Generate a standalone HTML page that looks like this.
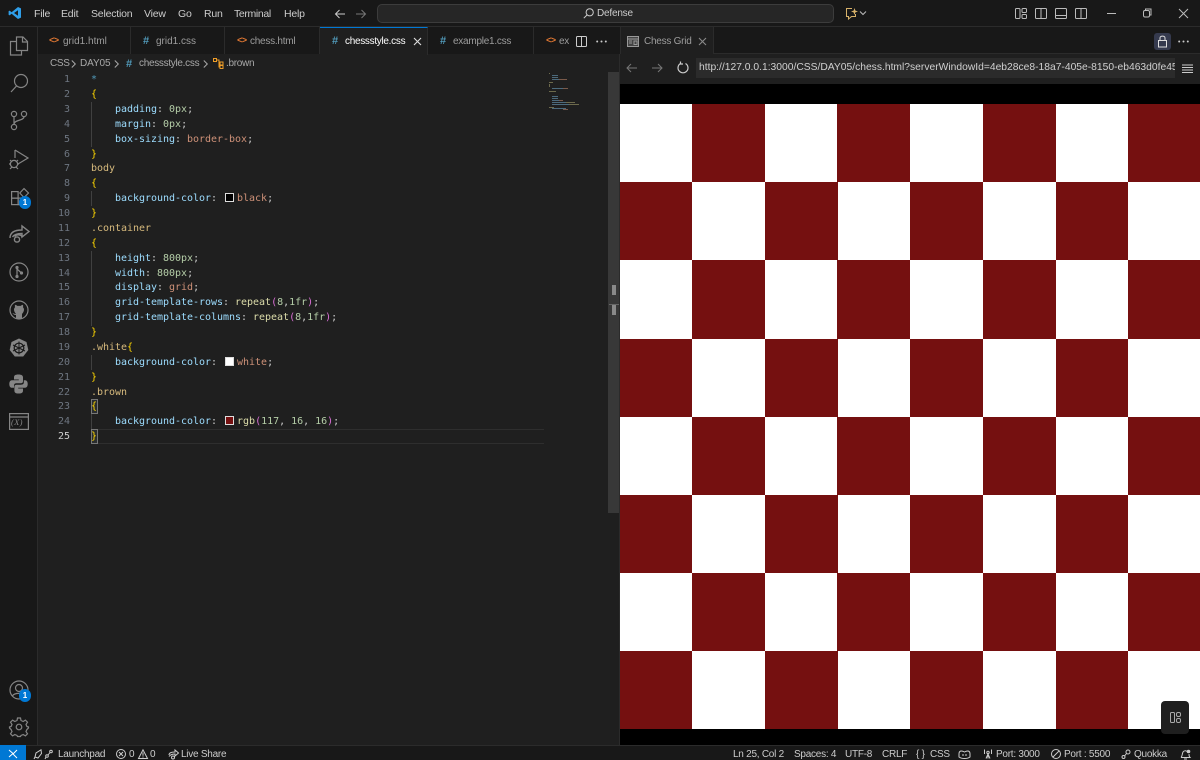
<!DOCTYPE html>
<html><head><meta charset="utf-8"><title>chessstyle.css</title>
<style>
html,body{margin:0;padding:0;width:1200px;height:760px;overflow:hidden;background:#1f1f1f}
*{box-sizing:border-box}
body{font-family:"Liberation Sans",sans-serif;position:relative;color:#ccc}
.a{position:absolute}
.t{position:absolute;white-space:nowrap;font-size:10.5px;line-height:14px;letter-spacing:-.2px}
svg{position:absolute;overflow:visible;fill:none}
.ln{position:absolute;left:40px;width:30px;text-align:right;font:10px/15px "DejaVu Sans Mono",monospace;letter-spacing:-.02px;color:#6e7681}
.c{position:absolute;left:91px;white-space:pre;font:10px/15px "DejaVu Sans Mono",monospace;letter-spacing:-.02px;color:#ccc}
.p{color:#9cdcfe}.v{color:#ce9178}.n{color:#b5cea8}.s{color:#d7ba7d}.b{color:#ffd700}.f{color:#dcdcaa}.q{color:#da70d6}
.sw{display:inline-block;width:9px;height:9px;border:1px solid #ddd;margin:0 3px 0 2px;vertical-align:-1px}
.g{position:absolute;left:91px;width:1px;background:#404040}
.tab{position:absolute;top:27px;height:27px;background:#181818;border-right:1px solid #2b2b2b}
.t.tt{color:#9d9d9d;font-size:10px;letter-spacing:-.25px}
.ic{position:absolute;color:#e37933;font:bold 9px/14px "Liberation Mono",monospace;letter-spacing:-.6px;white-space:nowrap}
.hs{position:absolute;color:#519aba;font-size:11px;line-height:14px;font-weight:bold}
.bc{position:absolute;white-space:nowrap;color:#a9a9a9;font-size:10px;line-height:14px;letter-spacing:-.3px}
.sq{position:absolute}
.st{position:absolute;top:749px;white-space:nowrap;font-size:10px;line-height:12px;letter-spacing:-.25px;color:#ccc}
</style></head><body>

<!-- title bar -->
<div class="a" style="left:0;top:0;width:1200px;height:27px;background:#181818;border-bottom:1px solid #2b2b2b"></div>
<svg style="left:8px;top:6px" width="14" height="14" viewBox="0 0 14 14"><path d="M10 1 L13 2.4 V11.6 L10 13 L3.6 7.8 L1.6 9.4 L.6 8.8 V5.2 L1.6 4.6 L3.6 6.2 Z M10 4.2 L6 7 L10 9.8 Z" fill="#2f9ee8" fill-rule="evenodd"/></svg>
<div class="t" style="left:34px;top:7px">File</div>
<div class="t" style="left:61px;top:7px">Edit</div>
<div class="t" style="left:91px;top:7px">Selection</div>
<div class="t" style="left:144px;top:7px">View</div>
<div class="t" style="left:178px;top:7px">Go</div>
<div class="t" style="left:204px;top:7px">Run</div>
<div class="t" style="left:234px;top:7px;letter-spacing:-.35px">Terminal</div>
<div class="t" style="left:284px;top:7px">Help</div>
<svg style="left:334px;top:8px" width="32" height="12" viewBox="0 0 32 12" stroke-width="1"><path d="M11 6H1.5M5.5 2L1.5 6L5.5 10" stroke="#ccc"/><path d="M22 6H31.5M27.5 2L31.5 6L27.5 10" stroke="#777"/></svg>
<div class="a" style="left:377px;top:4px;width:457px;height:19px;background:#262626;border:1px solid #3c3c3c;border-radius:5px"></div>
<svg style="left:583px;top:8px" width="11" height="11" viewBox="0 0 11 11" stroke="#ccc"><circle cx="6.7" cy="4.3" r="3.6"/><path d="M4 7L.8 10.2"/></svg>
<div class="t" style="left:597px;top:7px;color:#ccc;font-size:10px">Defense</div>
<svg style="left:845px;top:7px" width="22" height="13" viewBox="0 0 22 13" stroke="#d8b26a"><path d="M7 1.5H1.5V9.5H3.5V12L6.5 9.5H10.5V7" /><path d="M9.5 1L10.4 3.6L13 4.5L10.4 5.4L9.5 8L8.6 5.4L6 4.5L8.6 3.6Z" fill="#d8b26a" stroke="none"/><path d="M15 4.5L18 7.5L21 4.5" stroke="#bbb"/></svg>
<svg style="left:1015px;top:7px" width="72" height="13" viewBox="0 0 72 13" stroke="#bbb"><rect x=".5" y="1.5" width="4.5" height="10" rx="1"/><rect x="7" y="1.5" width="4.5" height="4" rx="1"/><rect x="7" y="7.5" width="4.5" height="4" rx="1"/><rect x="20.5" y="1.5" width="11" height="10" rx="1"/><path d="M26 1.5V11.5"/><rect x="40.5" y="1.5" width="11" height="10" rx="1"/><path d="M40.5 8.5H51.5"/><rect x="60.5" y="1.5" width="11" height="10" rx="1"/><path d="M66 1.5V11.5"/></svg>
<svg style="left:1107px;top:7px" width="88" height="13" viewBox="0 0 88 13" stroke="#bbb"><path d="M0 6.5H9"/><rect x="36.5" y="3.5" width="6" height="6.5" rx="1.5"/><path d="M38.5 3V2H44V8H43"/><path d="M72 2L81 11M81 2L72 11"/></svg>

<!-- activity bar -->
<div class="a" style="left:0;top:27px;width:38px;height:718px;background:#181818;border-right:1px solid #2b2b2b"></div>
<svg style="left:9px;top:36px" width="20" height="20" viewBox="0 0 20 20" stroke="#858585" stroke-width="1.2"><path d="M7.5 1H14L18.5 5.5V14.5H7.5Z"/><path d="M13.5 1V6H18.5"/><path d="M7.5 5.5H1.5V19H12.5V14.5"/></svg>
<svg style="left:10px;top:73px" width="19" height="20" viewBox="0 0 19 20" stroke="#858585" stroke-width="1.2"><circle cx="11" cy="8" r="6.5"/><path d="M6.5 13L1 19"/></svg>
<svg style="left:10px;top:110px" width="18" height="21" viewBox="0 0 18 21" stroke="#858585" stroke-width="1.2"><circle cx="4" cy="4" r="2.6"/><circle cx="14" cy="4" r="2.6"/><circle cx="4" cy="17" r="2.6"/><path d="M4 6.6V14.4M14 6.6C14 11 4 9.5 4 14.4"/></svg>
<svg style="left:9px;top:149px" width="20" height="21" viewBox="0 0 20 21" stroke="#858585" stroke-width="1.2"><path d="M6 1V9M6 1L19 9L9 15"/><circle cx="5" cy="15" r="3.6"/><path d="M1 11L3 13M9 11L7 13M0 15H1.5M8.5 15H10M1 20L3 18M9 20L7 18"/></svg>
<svg style="left:11px;top:188px" width="19" height="19" viewBox="0 0 19 19" stroke="#858585" stroke-width="1.2"><rect x=".6" y="3.6" width="6.5" height="6.5"/><rect x=".6" y="10.1" width="6.5" height="6.5"/><rect x="7.1" y="10.1" width="6.5" height="6.5"/><path d="M13 .6L17.5 5L13 9.5L8.8 5Z"/></svg>
<div class="a" style="left:19px;top:196px;width:12px;height:13px;border-radius:7px;background:#0078d4;color:#fff;font:bold 8px/13px 'Liberation Sans',sans-serif;text-align:center">1</div>
<svg style="left:9px;top:224px" width="21" height="19" viewBox="0 0 21 19" stroke="#858585" stroke-width="1.4"><path d="M1 14C1 8 6 6 13 6V2L20 7.5L13 13V9.5C8 9.5 5 10.5 3.5 13"/><path d="M5.5 12.5C8 9.5 13 11 13 13"/><circle cx="8" cy="15.5" r="2.6"/></svg>
<svg style="left:9px;top:262px" width="20" height="20" viewBox="0 0 20 20" stroke="#858585" stroke-width="1.2"><circle cx="10" cy="10" r="9"/><path d="M8 5V15M8 7L12.5 11"/><circle cx="8" cy="5.5" r="1" fill="#858585"/><circle cx="8" cy="14.5" r="1" fill="#858585"/><circle cx="12.5" cy="11" r="1" fill="#858585"/></svg>
<svg style="left:9px;top:300px" width="20" height="20" viewBox="0 0 20 20" stroke="#858585" stroke-width="1.2"><circle cx="10" cy="10" r="9"/><path d="M7 18.6V15C5 15 4 14 3.5 13C5 13.5 5.5 14 7 14C6 12.5 5 11.500 5 9.500C5 8.500 5.500 7.800 6 7.200C5.800 6.500 5.800 5.700 6 4.800C7 5 7.800 5.400 8.500 6C9.500 5.800 10.500 5.800 11.500 6C12.200 5.400 13 5 14 4.800C14.200 5.700 14.200 6.500 14 7.200C14.500 7.800 15 8.500 15 9.500C15 11.500 14 12.500 13 14V18.600Z" fill="#858585" stroke="none"/></svg>
<svg style="left:9px;top:338px" width="20" height="20" viewBox="0 0 20 20"><path d="M10 .5L17.500 4L19.300 12L14.200 18.500H5.800L.7 12L2.500 4Z" fill="#858585"/><circle cx="10" cy="10" r="4.800" stroke="#181818" stroke-width="1.200"/><path d="M10 3.500V16.500M4 7L16 13M4 13L16 7" stroke="#181818" stroke-width="1"/></svg>
<svg style="left:9px;top:374px" width="19" height="20" viewBox="0 0 19 20"><path d="M9.500.5C6 .5 5 1.500 5 3.500V5.500H9.800V6.300H3C1 6.300 .3 8 .3 10C.3 12 1 13.800 3 13.800H5V11.500C5 10 6 9.300 7.500 9.300H12C13.200 9.300 14 8.500 14 7.300V3.500C14 1.500 12.500 .5 9.500 .5Z" fill="#858585"/><path d="M9.500 19.500C13 19.500 14 18.500 14 16.500V14.500H9.200V13.700H16C18 13.700 18.700 12 18.700 10C18.700 8 18 6.200 16 6.200H14.800V8.500C14.800 10 13.500 10.700 12 10.700H7.500C6.300 10.700 5.400 11.500 5.400 12.700V16.500C5.400 18.500 6.500 19.500 9.500 19.500Z" fill="#858585"/></svg>
<svg style="left:9px;top:413px" width="20" height="17" viewBox="0 0 20 17" stroke="#858585" stroke-width="1.200"><rect x=".6" y=".6" width="18.800" height="15.800"/><path d="M.6 4H19.400"/></svg>
<div class="t" style="left:11px;top:416px;font:italic 8.500px/12px 'Liberation Serif',serif;color:#858585;letter-spacing:.3px">(X)</div>
<svg style="left:9px;top:680px" width="20" height="20" viewBox="0 0 20 20" stroke="#858585" stroke-width="1.200"><circle cx="10" cy="10" r="9"/><circle cx="10" cy="8" r="3.500"/><path d="M3.500 16C5 12.500 15 12.500 16.500 16"/></svg>
<div class="a" style="left:19px;top:689px;width:12px;height:13px;border-radius:7px;background:#0078d4;color:#fff;font:bold 8px/13px 'Liberation Sans',sans-serif;text-align:center">1</div>
<svg style="left:9px;top:717px" width="20" height="20" viewBox="0 0 20 20" stroke="#858585" stroke-width="1.200"><circle cx="10" cy="10" r="2.800"/><path d="M8.500 1H11.500L12 3.500L14.200 4.500L16.400 3.100L18.500 5.200L17 7.400L17.900 9.500L19.500 10V11L17.900 12.500L17 14.600L18.500 16.800L16.400 18.900L14.200 17.500L12 18.500L11.500 19.500H8.500L8 18.500L5.800 17.500L3.600 18.900L1.500 16.800L3 14.600L2.100 12.500L.5 11V10L2.100 9.500L3 7.400L1.500 5.200L3.600 3.100L5.800 4.500L8 3.500Z"/></svg>

<!-- editor tabs -->
<div class="a" style="left:38px;top:27px;width:582px;height:27px;background:#181818;border-bottom:1px solid #2b2b2b"></div>
<div class="tab" style="left:38px;width:93px"></div>
<div class="tab" style="left:131px;width:94px"></div>
<div class="tab" style="left:225px;width:95px"></div>
<div class="tab" style="left:320px;width:108px;background:#1f1f1f;border-top:1px solid #0078d4;height:28px"></div>
<div class="tab" style="left:428px;width:106px"></div>
<div class="tab" style="left:534px;width:86px;border-right:0"></div>
<div class="ic" style="left:49px;top:34px">&lt;&gt;</div>
<div class="t tt" style="left:63px;top:35px;letter-spacing:0">grid1.html</div>
<div class="hs" style="left:143px;top:34px">#</div>
<div class="t tt" style="left:156px;top:35px;letter-spacing:0">grid1.css</div>
<div class="ic" style="left:237px;top:34px">&lt;&gt;</div>
<div class="t tt" style="left:250px;top:35px">chess.html</div>
<div class="hs" style="left:332px;top:34px">#</div>
<div class="t" style="left:345px;top:35px;color:#fff;font-size:10px;letter-spacing:-.3px">chessstyle.css</div>
<svg style="left:413px;top:37px" width="9" height="9" viewBox="0 0 9 9" stroke="#ddd" stroke-width="1.100"><path d="M1 1L8 8M8 1L1 8"/></svg>
<div class="hs" style="left:440px;top:34px">#</div>
<div class="t tt" style="left:453px;top:35px">example1.css</div>
<div class="ic" style="left:546px;top:34px">&lt;&gt;</div>
<div class="t tt" style="left:559px;top:35px">ex</div>
<svg style="left:576px;top:36px" width="11" height="11" viewBox="0 0 11 11" stroke="#ccc"><rect x=".5" y=".5" width="10" height="10" rx="1"/><path d="M5.500 .5V10.500"/></svg>
<svg style="left:596px;top:40px" width="11" height="3" viewBox="0 0 11 3"><circle cx="1.200" cy="1.500" r="1" fill="#ccc"/><circle cx="5.500" cy="1.500" r="1" fill="#ccc"/><circle cx="9.800" cy="1.500" r="1" fill="#ccc"/></svg>

<!-- breadcrumbs -->
<div class="bc" style="left:50px;top:57px">CSS</div>
<svg style="left:71px;top:60px" width="5" height="8" viewBox="0 0 5 8" stroke="#a9a9a9"><path d="M.8 .5L4.300 4L.8 7.500"/></svg>
<div class="bc" style="left:80px;top:57px;letter-spacing:-.1px">DAY05</div>
<svg style="left:114px;top:60px" width="5" height="8" viewBox="0 0 5 8" stroke="#a9a9a9"><path d="M.8 .5L4.300 4L.8 7.500"/></svg>
<div class="hs" style="left:126px;top:57px">#</div>
<div class="bc" style="left:139px;top:57px">chessstyle.css</div>
<svg style="left:203px;top:60px" width="5" height="8" viewBox="0 0 5 8" stroke="#a9a9a9"><path d="M.8 .5L4.300 4L.8 7.500"/></svg>
<svg style="left:213px;top:58px" width="11" height="11" viewBox="0 0 11 11" stroke="#ee9d28"><rect x=".5" y=".5" width="3" height="3"/><rect x="7" y="4" width="3" height="3"/><rect x="7" y="7.500" width="3" height="3"/><path d="M3.500 2H6V9H7M6 5.500H7"/></svg>
<div class="bc" style="left:226px;top:57px">.brown</div>

<!-- line numbers & code -->
<div class="ln" style="top:72px">1</div><div class="ln" style="top:87px">2</div><div class="ln" style="top:102px">3</div><div class="ln" style="top:117px">4</div><div class="ln" style="top:132px">5</div><div class="ln" style="top:147px">6</div><div class="ln" style="top:161px">7</div><div class="ln" style="top:176px">8</div><div class="ln" style="top:191px">9</div><div class="ln" style="top:206px">10</div><div class="ln" style="top:221px">11</div><div class="ln" style="top:236px">12</div><div class="ln" style="top:251px">13</div><div class="ln" style="top:266px">14</div><div class="ln" style="top:280px">15</div><div class="ln" style="top:295px">16</div><div class="ln" style="top:310px">17</div><div class="ln" style="top:325px">18</div><div class="ln" style="top:340px">19</div><div class="ln" style="top:355px">20</div><div class="ln" style="top:370px">21</div><div class="ln" style="top:385px">22</div><div class="ln" style="top:399px">23</div><div class="ln" style="top:414px">24</div><div class="ln" style="top:429px;color:#ccc">25</div>

<div class="g" style="top:102px;height:45px"></div>
<div class="g" style="top:191px;height:15px"></div>
<div class="g" style="top:251px;height:75px"></div>
<div class="g" style="top:355px;height:15px"></div>
<div class="g" style="top:414px;height:15px"></div>
<div class="a" style="left:97px;top:429px;width:447px;height:15px;border-top:1px solid #2e2e2e;border-bottom:1px solid #2e2e2e"></div>
<div class="a" style="left:91px;top:399px;width:7px;height:15px;border:1px solid #777;background:#2a2d2e"></div>
<div class="a" style="left:91px;top:429px;width:7px;height:15px;border:1px solid #777;background:#2a2d2e"></div>

<div class="c" style="top:72px;color:#519aba">*</div>
<div class="c" style="top:87px;color:#ffd700">{</div>
<div class="c" style="top:102px">    <span class="p">padding</span>: <span class="n">0px</span>;</div>
<div class="c" style="top:117px">    <span class="p">margin</span>: <span class="n">0px</span>;</div>
<div class="c" style="top:132px">    <span class="p">box-sizing</span>: <span class="v">border-box</span>;</div>
<div class="c" style="top:147px;color:#ffd700">}</div>
<div class="c" style="top:161px;color:#d7ba7d">body</div>
<div class="c" style="top:176px;color:#ffd700">{</div>
<div class="c" style="top:191px">    <span class="p">background-color</span>: <span class="sw" style="background:#000"></span><span class="v">black</span>;</div>
<div class="c" style="top:206px;color:#ffd700">}</div>
<div class="c" style="top:221px;color:#d7ba7d">.container</div>
<div class="c" style="top:236px;color:#ffd700">{</div>
<div class="c" style="top:251px">    <span class="p">height</span>: <span class="n">800px</span>;</div>
<div class="c" style="top:266px">    <span class="p">width</span>: <span class="n">800px</span>;</div>
<div class="c" style="top:280px">    <span class="p">display</span>: <span class="v">grid</span>;</div>
<div class="c" style="top:295px">    <span class="p">grid-template-rows</span>: <span class="f">repeat</span><span class="q">(</span><span class="n">8</span>,<span class="n">1fr</span><span class="q">)</span>;</div>
<div class="c" style="top:310px">    <span class="p">grid-template-columns</span>: <span class="f">repeat</span><span class="q">(</span><span class="n">8</span>,<span class="n">1fr</span><span class="q">)</span>;</div>
<div class="c" style="top:325px;color:#ffd700">}</div>
<div class="c" style="top:340px"><span class="s">.white</span><span class="b">{</span></div>
<div class="c" style="top:355px">    <span class="p">background-color</span>: <span class="sw" style="background:#fff"></span><span class="v">white</span>;</div>
<div class="c" style="top:370px;color:#ffd700">}</div>
<div class="c" style="top:385px;color:#d7ba7d">.brown</div>
<div class="c" style="top:399px;color:#ffd700">{</div>
<div class="c" style="top:414px">    <span class="p">background-color</span>: <span class="sw" style="background:#751010"></span><span class="f">rgb</span><span class="q">(</span><span class="n">117</span>, <span class="n">16</span>, <span class="n">16</span><span class="q">)</span>;</div>
<div class="c" style="top:429px;color:#ffd700">}</div>

<!-- minimap -->
<svg style="left:549px;top:72px" width="36" height="40" viewBox="0 0 36 40">
<g fill="#4c6a7c"><rect x="3" y="3" width="6" height="1"/><rect x="3" y="5" width="6" height="1"/><rect x="3" y="7" width="7" height="1"/><rect x="3" y="16" width="14" height="1"/><rect x="3" y="24" width="6" height="1"/><rect x="3" y="26" width="6" height="1"/><rect x="3" y="28" width="8" height="1"/><rect x="3" y="30" width="16" height="1"/><rect x="3" y="32" width="20" height="1"/><rect x="3" y="36" width="14" height="1"/></g>
<g fill="#7a5a4a"><rect x="10" y="7" width="8" height="1"/><rect x="14" y="16" width="5" height="1"/><rect x="10" y="28" width="4" height="1"/><rect x="14" y="37" width="5" height="1"/></g>
<g fill="#6d6a4c"><rect x="0" y="1" width="1" height="1"/><rect x="0" y="10" width="4" height="1"/><rect x="0" y="12" width="1" height="3"/><rect x="0" y="19" width="7" height="1"/><rect x="20" y="32" width="10" height="1"/><rect x="17" y="30" width="9" height="1"/><rect x="0" y="35" width="5" height="1"/></g>
</svg>
<div class="a" style="left:608px;top:72px;width:11px;height:441px;background:#383838"></div>
<div class="a" style="left:612px;top:285px;width:4px;height:10px;background:#8a8a8a"></div>
<div class="a" style="left:612px;top:305px;width:4px;height:10px;background:#8a8a8a"></div>
<div class="a" style="left:609px;top:304px;width:10px;height:1px;background:#666"></div>
<div class="a" style="left:619px;top:54px;width:1px;height:691px;background:#2b2b2b"></div>

<!-- right panel -->
<div class="a" style="left:620px;top:27px;width:580px;height:27px;background:#181818;border-bottom:1px solid #2b2b2b"></div>
<div class="a" style="left:620px;top:27px;width:94px;height:28px;background:#1f1f1f;border-right:1px solid #2b2b2b;border-left:1px solid #2b2b2b"></div>
<svg style="left:627px;top:36px" width="12" height="11" viewBox="0 0 12 11" stroke="#999"><rect x=".5" y=".5" width="11" height="10" fill="#444"/><path d="M.5 3H11.500"/><rect x="7" y="5" width="3" height="3.500"/><path d="M2 5H5M2 7H5"/></svg>
<div class="t tt" style="left:644px;top:35px">Chess Grid</div>
<svg style="left:698px;top:37px" width="9" height="9" viewBox="0 0 9 9" stroke="#8a8a8a" stroke-width="1.100"><path d="M1 1L8 8M8 1L1 8"/></svg>
<div class="a" style="left:1154px;top:33px;width:17px;height:17px;background:#353a4e;border-radius:3px"></div>
<svg style="left:1158px;top:35px" width="9" height="13" viewBox="0 0 9 13" stroke="#ddd"><rect x=".5" y="5.500" width="8" height="6.500"/><path d="M2 5.500V3C2 .5 7 .5 7 3V5.500"/></svg>
<svg style="left:1178px;top:40px" width="11" height="3" viewBox="0 0 11 3"><circle cx="1.200" cy="1.500" r="1" fill="#ccc"/><circle cx="5.500" cy="1.500" r="1" fill="#ccc"/><circle cx="9.800" cy="1.500" r="1" fill="#ccc"/></svg>
<div class="a" style="left:620px;top:54px;width:580px;height:30px;background:#1f1f1f"></div>
<svg style="left:626px;top:62px" width="40" height="12" viewBox="0 0 40 12" stroke="#777"><path d="M11 6H1M5 2L1 6L5 10M26 6H36M32 2L36 6L32 10"/></svg>
<svg style="left:677px;top:61px" width="12" height="13" viewBox="0 0 12 13" stroke="#ccc" stroke-width="1.200"><path d="M3.500 2.500A5 5 0 1 0 8.500 2.500"/><path d="M3.500 .5V3H6"/></svg>
<div class="a" style="left:696px;top:58px;width:479px;height:20px;background:#2b2b2b;overflow:hidden"><div style="position:absolute;left:3px;top:3px;white-space:nowrap;font-size:10.3px;line-height:14px;color:#d0d0d0">http://127.0.0.1:3000/CSS/DAY05/chess.html?serverWindowId=4eb28ce8-18a7-405e-8150-eb463d0fe45</div></div>
<svg style="left:1182px;top:64px" width="11" height="9" viewBox="0 0 11 9" stroke="#ccc"><path d="M0 1H11M0 3.500H11M0 6H11M0 8.500H11"/></svg>

<!-- preview -->
<div class="a" style="left:620px;top:84px;width:580px;height:661px;background:#000"></div>
<div class="a" style="left:620px;top:104px;width:580px;height:625px;background:#fff"></div>
<div id="cb">
<div class="sq" style="left:692px;top:104px;width:73px;height:78px;background:#751010"></div>
<div class="sq" style="left:837px;top:104px;width:73px;height:78px;background:#751010"></div>
<div class="sq" style="left:983px;top:104px;width:73px;height:78px;background:#751010"></div>
<div class="sq" style="left:1128px;top:104px;width:72px;height:78px;background:#751010"></div>
<div class="sq" style="left:620px;top:182px;width:72px;height:78px;background:#751010"></div>
<div class="sq" style="left:765px;top:182px;width:73px;height:78px;background:#751010"></div>
<div class="sq" style="left:910px;top:182px;width:73px;height:78px;background:#751010"></div>
<div class="sq" style="left:1056px;top:182px;width:72px;height:78px;background:#751010"></div>
<div class="sq" style="left:692px;top:260px;width:73px;height:79px;background:#751010"></div>
<div class="sq" style="left:837px;top:260px;width:73px;height:79px;background:#751010"></div>
<div class="sq" style="left:983px;top:260px;width:73px;height:79px;background:#751010"></div>
<div class="sq" style="left:1128px;top:260px;width:72px;height:79px;background:#751010"></div>
<div class="sq" style="left:620px;top:339px;width:72px;height:78px;background:#751010"></div>
<div class="sq" style="left:765px;top:339px;width:73px;height:78px;background:#751010"></div>
<div class="sq" style="left:910px;top:339px;width:73px;height:78px;background:#751010"></div>
<div class="sq" style="left:1056px;top:339px;width:72px;height:78px;background:#751010"></div>
<div class="sq" style="left:692px;top:417px;width:73px;height:78px;background:#751010"></div>
<div class="sq" style="left:837px;top:417px;width:73px;height:78px;background:#751010"></div>
<div class="sq" style="left:983px;top:417px;width:73px;height:78px;background:#751010"></div>
<div class="sq" style="left:1128px;top:417px;width:72px;height:78px;background:#751010"></div>
<div class="sq" style="left:620px;top:495px;width:72px;height:78px;background:#751010"></div>
<div class="sq" style="left:765px;top:495px;width:73px;height:78px;background:#751010"></div>
<div class="sq" style="left:910px;top:495px;width:73px;height:78px;background:#751010"></div>
<div class="sq" style="left:1056px;top:495px;width:72px;height:78px;background:#751010"></div>
<div class="sq" style="left:692px;top:573px;width:73px;height:78px;background:#751010"></div>
<div class="sq" style="left:837px;top:573px;width:73px;height:78px;background:#751010"></div>
<div class="sq" style="left:983px;top:573px;width:73px;height:78px;background:#751010"></div>
<div class="sq" style="left:1128px;top:573px;width:72px;height:78px;background:#751010"></div>
<div class="sq" style="left:620px;top:651px;width:72px;height:78px;background:#751010"></div>
<div class="sq" style="left:765px;top:651px;width:73px;height:78px;background:#751010"></div>
<div class="sq" style="left:910px;top:651px;width:73px;height:78px;background:#751010"></div>
<div class="sq" style="left:1056px;top:651px;width:72px;height:78px;background:#751010"></div>
</div>
<div class="a" style="left:1161px;top:701px;width:28px;height:33px;background:#1f1f1f;border-radius:4px"></div>
<svg style="left:1170px;top:712px" width="11" height="11" viewBox="0 0 11 11" stroke="#aaa"><rect x=".5" y=".5" width="4" height="10" rx="1"/><rect x="6.500" y=".5" width="4" height="4" rx="1.500"/><rect x="6.500" y="6.500" width="4" height="4" rx="1.500"/></svg>

<!-- status bar -->
<div class="a" style="left:0;top:745px;width:1200px;height:15px;background:#181818;border-top:1px solid #2b2b2b"></div>
<div class="a" style="left:0;top:745px;width:26px;height:15px;background:#0078d4"></div>
<svg style="left:8px;top:749px" width="10" height="10" viewBox="0 0 10 10" stroke="#fff"><path d="M1 8L5 4.500L1 1M9 1L5 5L9 9"/></svg>
<svg style="left:33px;top:749px" width="20" height="11" viewBox="0 0 20 11" stroke="#ccc"><path d="M2 8L3 4L8 .8L8.500 4.500L5 9Z M2 8L1 10"/><circle cx="14" cy="7" r="1.300"/><circle cx="18" cy="2.500" r="1.300"/><path d="M15 6L17 3.500M12 10L13 8"/></svg>
<div class="st" style="left:58px">Launchpad</div>
<svg style="left:116px;top:749px" width="10" height="10" viewBox="0 0 10 10" stroke="#ccc"><circle cx="5" cy="5" r="4.500"/><path d="M3 3L7 7M7 3L3 7"/></svg>
<div class="st" style="left:129px">0</div>
<svg style="left:138px;top:749px" width="10" height="10" viewBox="0 0 10 10" stroke="#ccc"><path d="M5 .8L9.500 9.500H.5Z"/><path d="M5 3.500V6.800M5 7.500V8.500"/></svg>
<div class="st" style="left:150px">0</div>
<svg style="left:168px;top:749px" width="11" height="11" viewBox="0 0 11 11" stroke="#ccc"><path d="M1 6C1 3.500 3.500 3 7 3V1L10.500 4L7 7V5C4 5 2.500 5.500 1 7.500"/><circle cx="5" cy="8.500" r="1.500"/></svg>
<div class="st" style="left:181px">Live Share</div>
<div class="st" style="left:733px">Ln 25, Col 2</div>
<div class="st" style="left:794px">Spaces: 4</div>
<div class="st" style="left:845px">UTF-8</div>
<div class="st" style="left:882px">CRLF</div>
<div class="st" style="left:916px">{ }</div>
<div class="st" style="left:930px">CSS</div>
<svg style="left:958px;top:749px" width="13" height="10" viewBox="0 0 13 10" stroke="#ccc"><path d="M1 5C1 2 3 1 6.500 3C10 1 12 2 12 5V8C9 10 4 10 1 8Z"/><path d="M5 5V7M8 5V7"/></svg>
<svg style="left:983px;top:749px" width="10" height="10" viewBox="0 0 10 10" stroke="#ccc"><circle cx="5" cy="3.500" r="1.200"/><path d="M5 4.500V9.500M3 9.500L5 5L7 9.500M1.500 .5V5M8.500 .5V5"/></svg>
<div class="st" style="left:996px">Port: 3000</div>
<svg style="left:1051px;top:749px" width="10" height="10" viewBox="0 0 10 10" stroke="#ccc"><circle cx="5" cy="5" r="4.500"/><path d="M2 8L8 2"/></svg>
<div class="st" style="left:1064px">Port : 5500</div>
<svg style="left:1121px;top:749px" width="10" height="10" viewBox="0 0 10 10" stroke="#ccc"><circle cx="2.500" cy="8" r="1.500"/><circle cx="7" cy="3" r="2"/><path d="M3.500 7L5.500 4.500"/></svg>
<div class="st" style="left:1134px">Quokka</div>
<svg style="left:1180px;top:749px" width="11" height="11" viewBox="0 0 11 11" stroke="#ccc"><path d="M1 8.500C2.500 7 2 5 3 3C4 1.500 6 1.500 7 2.500M9 5C9 6.500 9 7.500 10 8.500H1M4 10H7"/><circle cx="8.500" cy="2.500" r="1.800" fill="#ccc" stroke="none"/></svg>

</body></html>
